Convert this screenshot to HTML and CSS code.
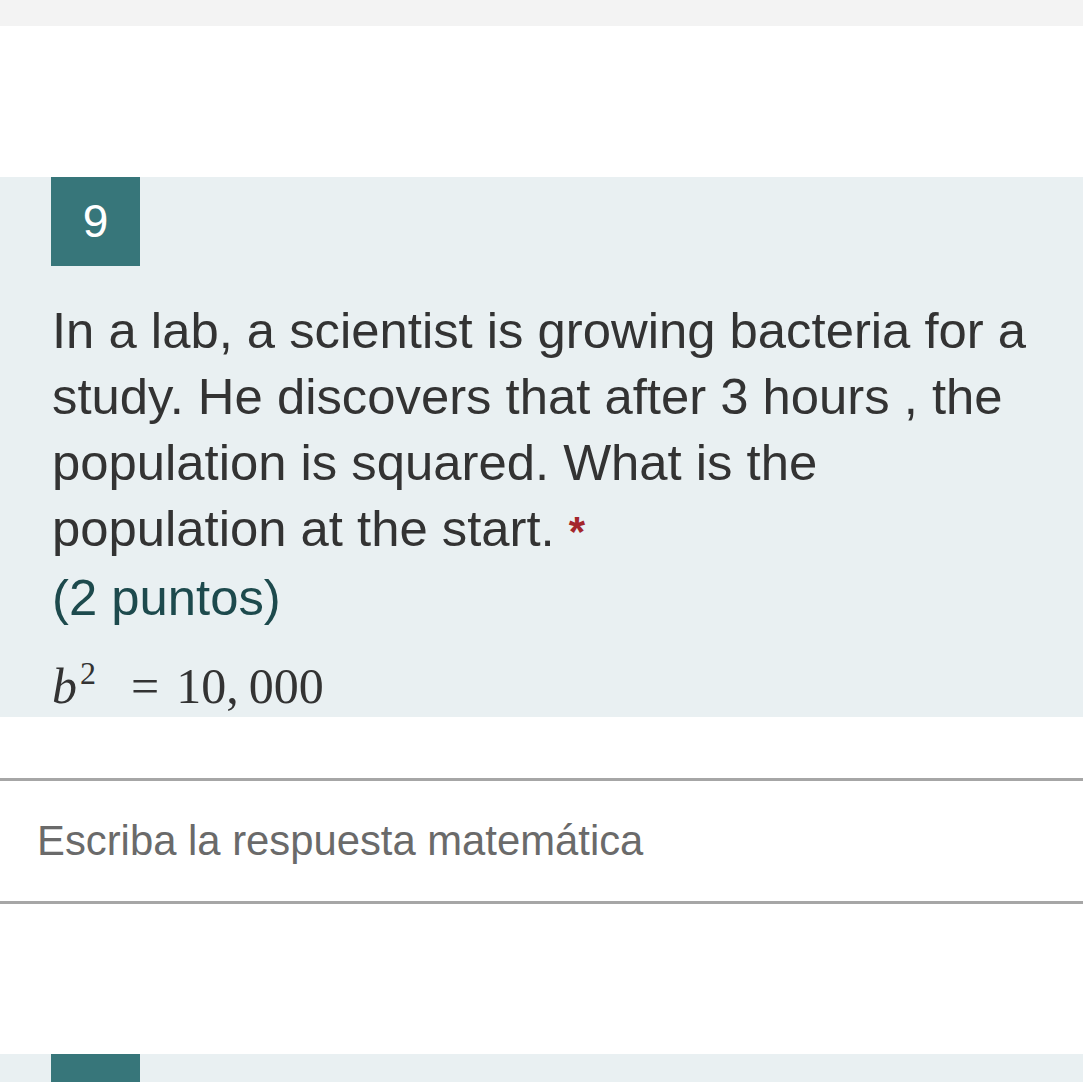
FILE: index.html
```html
<!DOCTYPE html>
<html lang="es">
<head>
<meta charset="utf-8">
<title>Pregunta 9</title>
<link rel="stylesheet" href="styles.css">
</head>
<body>
  <div class="topbar"></div>
  <div class="gap-top"></div>
  <section class="question">
    <div class="qnum">9</div>
    <div class="qtext">In a lab, a scientist is growing bacteria for a study. He discovers that after 3 hours , the population is squared. What is the population at the start. <span class="req">*</span></div>
    <div class="points">(2 puntos)</div>
    <div class="math"><span class="var">b</span><span class="sup">2</span><span class="eq">=</span><span class="num">10,&#8201;000</span></div>
  </section>
  <div class="answer">
    <div class="placeholder">Escriba la respuesta matemática</div>
  </div>
  <section class="question next">
    <div class="qnum"></div>
  </section>
</body>
</html>
```

FILE: styles.css
```css
html, body {
  margin: 0;
  padding: 0;
  background: #ffffff;
  font-family: "Liberation Sans", Arial, sans-serif;
}

.topbar {
  height: 26px;
  background: #f3f3f3;
}

.gap-top {
  height: 151px;
}

.question {
  background: #e9f0f2;
  padding: 0 40px 0 51px;
}

.qnum {
  width: 89px;
  height: 89px;
  background: #37767a;
  color: #ffffff;
  font-size: 46px;
  line-height: 89px;
  text-align: center;
}

.qtext {
  margin-top: 32px;
  font-size: 50.8px;
  line-height: 66px;
  color: #333333;
  padding-left: 1px;
}

.req {
  color: #a4262c;
  font-size: 42px;
  font-weight: bold;
}

.points {
  font-size: 50.8px;
  line-height: 66px;
  color: #1d4a4d;
  padding-left: 1px;
}

.math {
  margin-top: 25px;
  height: 61px;
  font-family: "Liberation Serif", "Times New Roman", serif;
  font-size: 50px;
  line-height: 61px;
  color: #333333;
  display: flex;
  align-items: baseline;
}

.var {
  font-style: italic;
  margin-left: 1px;
}

.sup {
  font-size: 32px;
  position: relative;
  top: -19px;
  margin-left: 3px;
}

.eq {
  margin-left: 35px;
}

.num {
  margin-left: 17px;
}

.answer {
  margin-top: 61px;
  border-top: 3px solid #a6a6a6;
  border-bottom: 3px solid #a6a6a6;
  height: 120px;
  box-sizing: content-box;
}

.placeholder {
  padding: 2px 0 0 37px;
  font-size: 41.8px;
  line-height: 116px;
  color: #6a6a6a;
}

.question.next {
  margin-top: 150px;
  height: 120px;
}

.question.next .qnum {
  height: 120px;
}
```
